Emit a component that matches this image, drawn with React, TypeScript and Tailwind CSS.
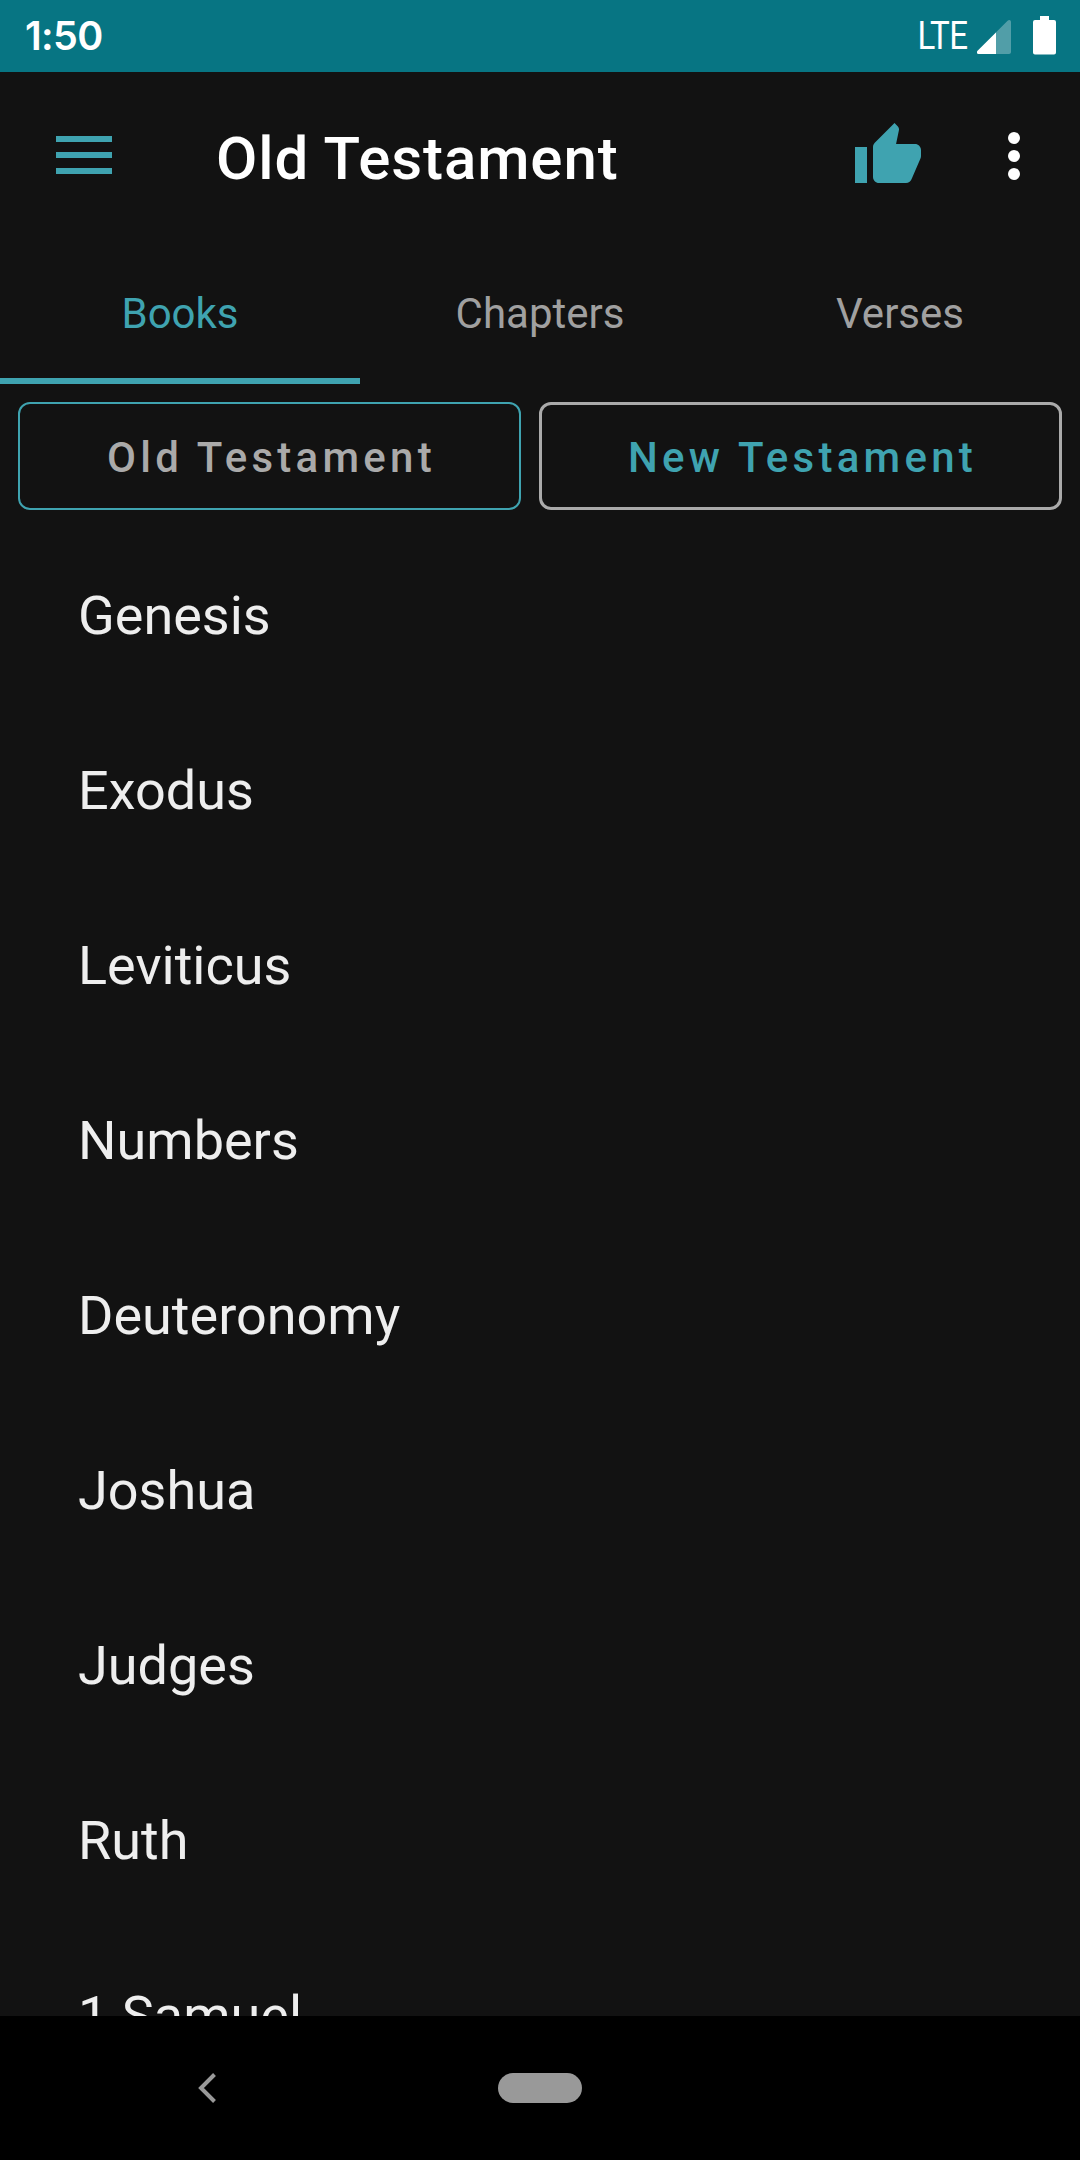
import clsx from "clsx";

const TABS = ["Books", "Chapters", "Verses"];

const BOOKS = [
  "Genesis",
  "Exodus",
  "Leviticus",
  "Numbers",
  "Deuteronomy",
  "Joshua",
  "Judges",
  "Ruth",
  "1 Samuel",
];

function StatusBar() {
  return (
    <div className="flex h-[72px] shrink-0 items-start justify-between bg-[#077583] pr-6 pl-[25px] text-white">
      <span className="pt-[15px] font-['Inter'] text-[39.5px] leading-[42px] font-semibold tracking-[-0.6px]">1:50</span>
      <div className="flex items-start">
        <span className="mt-[14px] origin-right scale-x-[0.87] text-[38px] leading-[44px] tracking-[-0.8px]">LTE</span>
        <svg className="mt-5 ml-[10px] h-[34px] w-[34px]" viewBox="0 0 34 34" fill="currentColor" aria-hidden="true">
          <path
            d="M0.6 30.8 30.6 0.8C32 -0.6 34 0 34 2V32C34 33.2 33.2 34 32 34H1.6C0 34 -0.8 32.2 0.6 30.8Z"
            opacity="0.3"
          />
          <path d="M0.6 30.8 19 12.4V34H1.6C0 34 -0.8 32.2 0.6 30.8Z" />
        </svg>
        <svg className="mt-4 ml-[22px] h-[39px] w-[23px]" viewBox="0 0 23 39" fill="currentColor" aria-hidden="true">
          <path d="M7 0H16V4H21A2 2 0 0 1 23 6V36.5A2 2 0 0 1 21 38.5H2A2 2 0 0 1 0 36.5V6A2 2 0 0 1 2 4H7Z" />
        </svg>
      </div>
    </div>
  );
}

function Toolbar() {
  return (
    <header className="flex h-[168px] shrink-0 items-start pt-12 pr-[30px] pl-14">
      <button className="mt-4 flex w-14 flex-col gap-[10px]" aria-label="Menu">
        <span className="h-1.5 w-full bg-[#3fa3b0]" />
        <span className="h-1.5 w-full bg-[#3fa3b0]" />
        <span className="h-1.5 w-full bg-[#3fa3b0]" />
      </button>
      <h1 className="ml-26 flex-1 text-[60px] leading-[78px] font-medium tracking-[0.9px] text-white">
        Old Testament
      </h1>
      <button className="text-[#3fa3b0]" aria-label="Like">
        <svg className="size-[72px]" viewBox="0 0 24 24" fill="currentColor" aria-hidden="true">
          <path d="M1 21h4V9H1v12zm22-11c0-1.1-.9-2-2-2h-6.31l.95-4.57.03-.32c0-.41-.17-.79-.44-1.06L14.17 1 7.59 7.59C7.22 7.95 7 8.45 7 9v10c0 1.1.9 2 2 2h9c.83 0 1.54-.5 1.84-1.22l3.02-7.05c.09-.23.14-.47.14-.73v-2z" />
        </svg>
      </button>
      <button className="ml-[54px] text-white" aria-label="More options">
        <svg className="size-[72px]" viewBox="0 0 24 24" fill="currentColor" aria-hidden="true">
          <circle cx="12" cy="6" r="2" />
          <circle cx="12" cy="12" r="2" />
          <circle cx="12" cy="18" r="2" />
        </svg>
      </button>
    </header>
  );
}

function TabBar() {
  return (
    <nav className="grid h-36 shrink-0 grid-cols-3">
      {TABS.map((tab, i) => (
        <button
          key={tab}
          className={clsx(
            "border-b-6 pt-2.5 text-[42px] leading-none",
            i === 0 ? "border-[#3fa3b0] text-[#3fa3b0]" : "border-transparent text-[#a0a0a0]",
          )}
        >
          {tab}
        </button>
      ))}
    </nav>
  );
}

export default function App() {
  return (
    <div className="flex h-[2160px] w-[1080px] flex-col overflow-hidden bg-[#121212] font-['Roboto',sans-serif]">
      <StatusBar />
      <Toolbar />
      <TabBar />

      {/* Testament switch */}
      <div className="flex shrink-0 gap-[18px] p-[18px]">
        <button className="h-27 w-[503px] rounded-xl border-2 border-[#3fa3b0] pt-1 pl-1 text-[42px] leading-none font-medium tracking-[4.25px] text-[#aaaaaa]">
          Old Testament
        </button>
        <button className="h-27 flex-1 rounded-xl border-3 border-[#aaaaaa] pt-1 pl-1 text-[42px] leading-none font-medium tracking-[4.25px] text-[#3fa3b0]">
          New Testament
        </button>
      </div>

      {/* Book list */}
      <ul className="min-h-0 flex-1 overflow-hidden">
        {BOOKS.map((book) => (
          <li key={book} className="h-[175px] pl-[78px] text-[54px] leading-[175px] text-[#eeeeee]">
            {book}
          </li>
        ))}
      </ul>

      {/* System navigation */}
      <div className="flex h-36 shrink-0 items-center bg-black pl-[198px]">
        <svg className="h-[30px] w-[18px]" viewBox="0 0 18 30" fill="none" aria-hidden="true">
          <path d="M16.5 1.5 3 15 16.5 28.5" stroke="#999999" strokeWidth="4" />
        </svg>
        <div className="ml-[282px] h-[30px] w-[84px] rounded-full bg-[#999999]" />
      </div>
    </div>
  );
}
